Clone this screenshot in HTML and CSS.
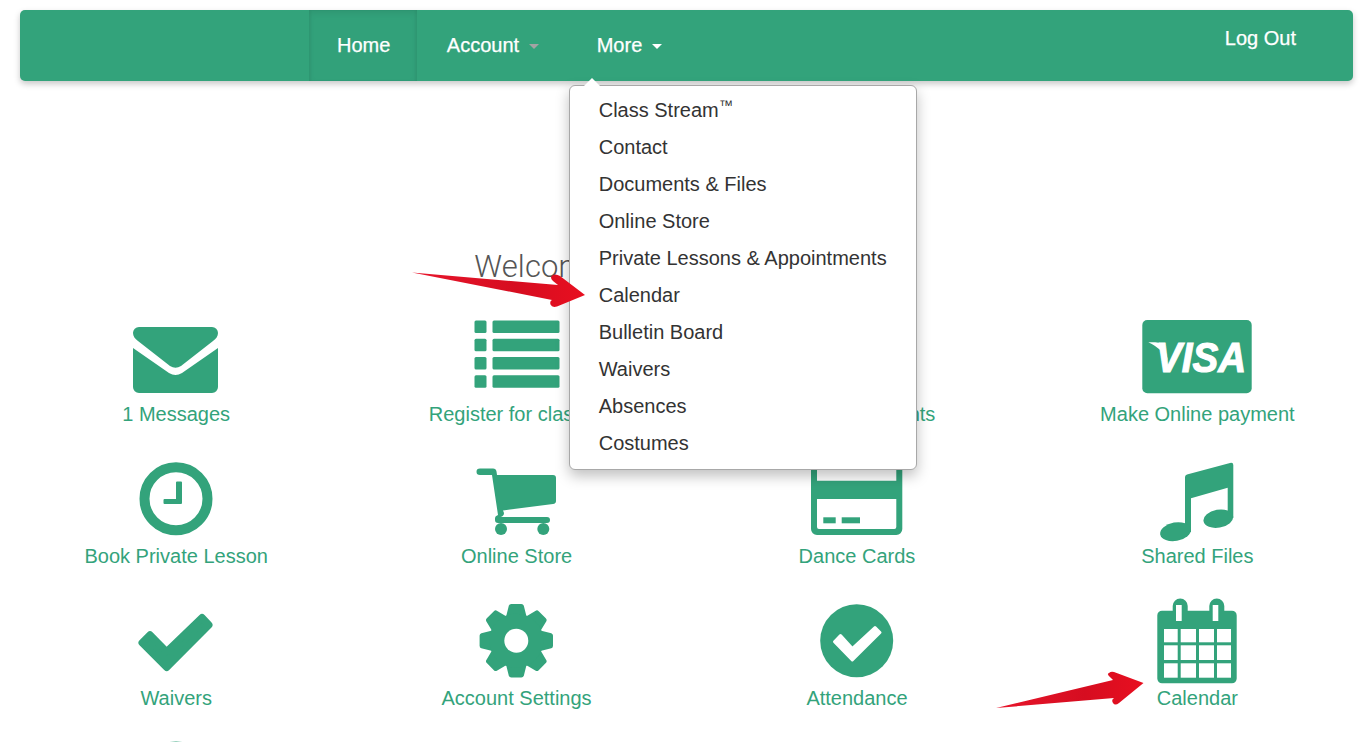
FILE: index.html
```html
<!DOCTYPE html>
<html lang="en">
<head>
    <meta charset="UTF-8">
    <meta name="viewport" content="width=device-width, initial-scale=1.0">
    <title>Dashboard</title>
    <link rel="stylesheet" href="styles.css">
</head>
<body>
    <div class="page">
        <nav class="navbar">
            <ul class="nav-list">
                <li class="nav-item active"><a href="#">Home</a></li>
                <li class="nav-item wide"><a href="#">Account <span class="caret muted"></span></a></li>
                <li class="nav-item">
                    <a href="#">More <span class="caret"></span></a>
                    <ul class="dropdown">
                        <li>Class Stream<span class="tm">™</span></li>
                        <li>Contact</li>
                        <li>Documents &amp; Files</li>
                        <li>Online Store</li>
                        <li>Private Lessons &amp; Appointments</li>
                        <li>Calendar</li>
                        <li>Bulletin Board</li>
                        <li>Waivers</li>
                        <li>Absences</li>
                        <li>Costumes</li>
                    </ul>
                </li>
            </ul>
            <a class="logout" href="#">Log Out</a>
        </nav>

        <h1 class="welcome">Welcome to your Parent Portal</h1>

        <div class="tiles">
            <a class="tile" href="#">
                <svg class="icon" viewBox="0 0 120 84">
                    <path d="M23 11H96a6 6 0 0 1 6 6c0 3-2 6-5 8L65 50q-5.500 3.500-11 0L22 25c-3-2-5-5-5-8a6 6 0 0 1 6-6z"/>
                    <path d="M17 32L53 57q6.500 4 13 0L102 32V71a6 6 0 0 1-6 6H23a6 6 0 0 1-6-6z"/>
                </svg>
                <span>1 Messages</span>
            </a>
            <a class="tile" href="#">
                <svg class="icon" viewBox="0 0 120 84">
                    <rect x="17.500" y="4.500" width="12" height="12.500" rx="1.500"/>
                    <rect x="35.500" y="4.500" width="67" height="12.500" rx="1.500"/>
                    <rect x="17.500" y="22.700" width="12" height="12.500" rx="1.500"/>
                    <rect x="35.500" y="22.700" width="67" height="12.500" rx="1.500"/>
                    <rect x="17.500" y="41" width="12" height="12.500" rx="1.500"/>
                    <rect x="35.500" y="41" width="67" height="12.500" rx="1.500"/>
                    <rect x="17.500" y="59.200" width="12" height="12.500" rx="1.500"/>
                    <rect x="35.500" y="59.200" width="67" height="12.500" rx="1.500"/>
                </svg>
                <span>Register for classes</span>
            </a>
            <a class="tile" href="#">
                <svg class="icon" viewBox="0 0 120 84">
                    <rect x="20" y="4" width="80" height="70" rx="6"/>
                </svg>
                <span>Upcoming Events</span>
            </a>
            <a class="tile" href="#">
                <svg class="icon" viewBox="0 0 120 84">
                    <rect x="5.300" y="4" width="109.400" height="73.300" rx="5"/>
                    <text class="visa" x="19" y="56" textLength="90" lengthAdjust="spacingAndGlyphs">VISA</text>
                    <path class="cut" d="M11.300 26.300C17 26 24 26.500 27 28L31 45C28 37 21 31 11.300 26.300z"/>
                </svg>
                <span>Make Online payment</span>
            </a>

            <a class="tile" href="#">
                <svg class="icon" viewBox="0 0 120 84">
                    <circle class="ring" cx="60" cy="40.700" r="31.500"/>
                    <path d="M60 24.500a1 1 0 0 1 1-1h4a1 1 0 0 1 1 1V45a1 1 0 0 1-1 1H48.500a1 1 0 0 1-1-1v-3a1 1 0 0 1 1-1H60z"/>
                </svg>
                <span>Book Private Lesson</span>
            </a>
            <a class="tile" href="#">
                <svg class="icon" viewBox="0 0 120 84">
                    <g transform="translate(-1 0)">
                        <path d="M24 10.500H37q3 0 3.500 3L41 17H97q3 0 3 3V43q0 2.500-3 3L47 52.500L48 55q0 3-3.500 4H91q3 0 3 3t-3 3H42q-3 0-3-3v-2q0-2 3-3L36 17H24q-3.500 0-3.500-3.250t3.500-3.250z"/>
                        <circle cx="45" cy="71" r="6"/>
                        <circle cx="87.300" cy="71" r="6"/>
                    </g>
                </svg>
                <span>Online Store</span>
            </a>
            <a class="tile" href="#">
                <svg class="icon" viewBox="0 0 120 84">
                    <path fill-rule="evenodd" d="M14 0H105.300V71a6 6 0 0 1-6 6H20a6 6 0 0 1-6-6zM20 4V22.700H99.300V4zM20 41V69a2 2 0 0 0 2 2H97.300a2 2 0 0 0 2-2V41z"/>
                    <rect x="26.300" y="59.300" width="12.400" height="6"/>
                    <rect x="44.700" y="59.300" width="18.300" height="6"/>
                </svg>
                <span>Dance Cards</span>
            </a>
            <a class="tile" href="#">
                <svg class="icon" viewBox="0 0 120 84">
                    <path d="M48 19q0-2 2-2.600L93 5q3.300-.8 3.300 2V60H90.700V29.700L54 40.300V74H48z"/>
                    <ellipse cx="81.300" cy="60.700" rx="15" ry="9" transform="rotate(-10 81.300 60.700)"/>
                    <ellipse cx="38.500" cy="73.700" rx="15.500" ry="9.300" transform="rotate(-10 38.500 73.700)"/>
                </svg>
                <span>Shared Files</span>
            </a>

            <a class="tile" href="#">
                <svg class="icon" viewBox="0 0 120 84">
                    <polygon class="rounded" points="26,42.700 34,34.700 50.700,51.600 86,17.500 93,25 50.700,67.500"/>
                </svg>
                <span>Waivers</span>
            </a>
            <a class="tile" href="#">
                <svg class="icon" viewBox="0 0 120 84">
                    <defs>
                        <path id="tooth" d="M-10-25L-7.500-35Q-7-36.700-5-36.700H5Q7-36.700 7.500-35L10-25V25L7.500 35Q7 36.700 5 36.700H-5Q-7 36.700-7.500 35L-10 25z"/>
                    </defs>
                    <g transform="translate(59.300 40.700)">
                        <use href="#tooth"/>
                        <use href="#tooth" transform="rotate(45)"/>
                        <use href="#tooth" transform="rotate(90)"/>
                        <use href="#tooth" transform="rotate(135)"/>
                        <circle r="27"/>
                        <circle class="cut" r="12"/>
                    </g>
                </svg>
                <span>Account Settings</span>
            </a>
            <a class="tile" href="#">
                <svg class="icon" viewBox="0 0 120 84">
                    <circle cx="59.700" cy="40.700" r="36.500"/>
                    <polygon class="cut rounded-thin" points="37.500,41.700 43.500,35.500 55.300,48.500 78,27.500 83,32.500 55.300,60"/>
                </svg>
                <span>Attendance</span>
            </a>
            <a class="tile" href="#">
                <svg class="icon" viewBox="0 0 120 84">
                    <path fill-rule="evenodd" d="M25 10.700H35.700V6a7.500 7.500 0 0 1 15 0V10.700H72.300V6a7.500 7.500 0 0 1 15 0V10.700H95a4.700 4.700 0 0 1 4.700 4.700V78.600A4.700 4.700 0 0 1 95 83.300H25a4.700 4.700 0 0 1-4.700-4.700V15.400A4.700 4.700 0 0 1 25 10.700zM39 5V21H44.700V5zM75.700 5V21H81.300V5z"/>
                    <g class="cut">
                        <rect x="27" y="29" width="13.700" height="13.300"/>
                        <rect x="43.700" y="29" width="15.300" height="13.300"/>
                        <rect x="62" y="29" width="15" height="13.300"/>
                        <rect x="80" y="29" width="14" height="13.300"/>
                        <rect x="27" y="45.300" width="13.700" height="14.700"/>
                        <rect x="43.700" y="45.300" width="15.300" height="14.700"/>
                        <rect x="62" y="45.300" width="15" height="14.700"/>
                        <rect x="80" y="45.300" width="14" height="14.700"/>
                        <rect x="27" y="63.300" width="13.700" height="14.400"/>
                        <rect x="43.700" y="63.300" width="15.300" height="14.400"/>
                        <rect x="62" y="63.300" width="15" height="14.400"/>
                        <rect x="80" y="63.300" width="14" height="14.400"/>
                    </g>
                </svg>
                <span>Calendar</span>
            </a>

            <a class="tile" href="#">
                <svg class="icon" viewBox="0 0 120 84">
                    <circle cx="60" cy="40" r="40.500"/>
                </svg>
            </a>
        </div>

        <!-- red annotation arrows drawn over the screenshot -->
        <svg class="arrows" viewBox="0 0 1366 742">
            <defs>
                <linearGradient id="red" x1="0" y1="0" x2="1" y2="0">
                    <stop offset="0" stop-color="#e8162c"/>
                    <stop offset="0.6" stop-color="#d60d20"/>
                    <stop offset="1" stop-color="#e80f20"/>
                </linearGradient>
            </defs>
            <path d="M412 272.500L558 285L553 281Q549 277 553 275Q556 273.500 560 276L585 295L557 306.500Q552 308 550.500 304.500Q549.500 301 552 300z"/>
            <path d="M996 708L1113 680L1111 678Q1106 674 1109 673Q1111 671 1114 672L1143.500 683L1119 703Q1115 706 1113 703Q1111 700 1114 698z"/>
        </svg>
    </div>
</body>
</html>
```

FILE: styles.css
```css
body {
    margin: 0;
    font-family: "Liberation Sans", Arial, sans-serif;
    font-size: 20px;
    background-color: #fff;
}
a {
    color: inherit;
    text-decoration: none;
}
.page {
    position: relative;
    height: 742px;
    overflow: hidden;
}
.navbar {
    display: flex;
    justify-content: space-between;
    height: 71px;
    margin: 10px 13px 0 20px;
    padding-left: 289px;
    padding-right: 57px;
    color: #fff;
    background-color: #33a37b;
    border-radius: 5px;
    box-shadow: 0 3px 6px rgba(0, 0, 0, 0.22);
    -webkit-text-stroke: 0.25px #fff;
}
.nav-list {
    display: flex;
    margin: 0;
    padding: 0;
    list-style: none;
}
.nav-item {
    position: relative;
    display: flex;
    align-items: center;
    padding: 0 28px;
}
.nav-item.wide {
    padding: 0 30px 0 29.5px;
}
.nav-item.active {
    padding-right: 27px;
    background-color: #32a17a;
    box-shadow: inset 0 3px 6px rgba(0, 0, 0, 0.07), inset 2px 0 2px rgba(0, 0, 0, 0.03), inset -2px 0 2px rgba(0, 0, 0, 0.03);
}
.caret {
    display: inline-block;
    margin-left: 4px;
    vertical-align: middle;
    border-top: 5px solid #fff;
    border-left: 5.5px solid transparent;
    border-right: 5.5px solid transparent;
}
.caret.muted {
    border-top-color: #a3a3a3;
}
.logout {
    align-self: center;
    padding-bottom: 14px;
}
.dropdown {
    position: absolute;
    top: 75px;
    left: 0;
    z-index: 2;
    width: 348px;
    box-sizing: border-box;
    margin: 0;
    padding: 6px 0 7px;
    color: #333;
    list-style: none;
    background-color: #fff;
    border: 1px solid #a8a8a8;
    border-radius: 6px;
    box-shadow: 0 6px 14px rgba(0, 0, 0, 0.25);
    -webkit-text-stroke: 0;
}
.dropdown::before {
    content: "";
    position: absolute;
    top: -8px;
    left: 14px;
    border-bottom: 8px solid #fff;
    border-left: 8px solid transparent;
    border-right: 8px solid transparent;
}
.dropdown li {
    height: 37px;
    padding-left: 29px;
    line-height: 37px;
    white-space: nowrap;
}
.tm {
    position: relative;
    top: -7px;
    font-size: 14px;
}
.welcome {
    margin: 166px 0 29px;
    font-family: Roboto, sans-serif;
    font-size: 31px;
    font-weight: 300;
    letter-spacing: 0.14px;
    line-height: 40px;
    text-align: center;
    color: #555;
}
.tiles {
    display: grid;
    grid-template-columns: repeat(4, 340.4px);
    grid-auto-rows: 142px;
    padding-left: 6px;
}
.tile {
    display: flex;
    flex-direction: column;
    align-items: center;
    color: #33a37b;
    line-height: 28px;
}
.icon {
    display: block;
    flex-shrink: 0;
    width: 120px;
    height: 84px;
    overflow: visible;
    fill: #33a37b;
}
.cut {
    fill: #fff;
}
.ring {
    fill: none;
    stroke: #33a37b;
    stroke-width: 10;
}
.rounded {
    stroke: #33a37b;
    stroke-width: 7;
    stroke-linejoin: round;
}
.rounded-thin {
    stroke: #fff;
    stroke-width: 3;
    stroke-linejoin: round;
}
.visa {
    font-size: 43px;
    font-weight: bold;
    font-style: italic;
    fill: #fff;
    stroke: #fff;
    stroke-width: 1.2;
}
.arrows {
    position: absolute;
    top: 0;
    left: 0;
    z-index: 3;
    width: 1366px;
    height: 742px;
    fill: url(#red);
    pointer-events: none;
}
```
